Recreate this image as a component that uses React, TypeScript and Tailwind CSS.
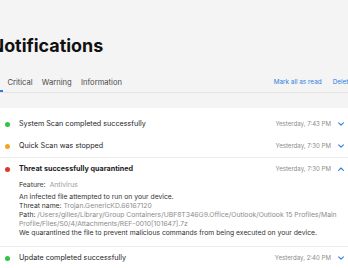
import React from 'react';

type Item = {
  id: number;
  title: string;
  time: string;
  color: string;
  open?: boolean;
};

const items: Item[] = [
  { id: 1, title: 'System Scan completed successfully', time: 'Yesterday, 7:43 PM', color: 'bg-[#2fc53f]' },
  { id: 2, title: 'Quick Scan was stopped', time: 'Yesterday, 7:30 PM', color: 'bg-[#f5a426]' },
  { id: 3, title: 'Threat successfully quarantined', time: 'Yesterday, 7:30 PM', color: 'bg-[#e5322b]', open: true },
  { id: 4, title: 'Update completed successfully', time: 'Yesterday, 2:40 PM', color: 'bg-[#2fc53f]' },
];

const Chevron = ({ up }: { up?: boolean }) => (
  <svg width="6" height="4" viewBox="0 0 6 4" className="ml-[7px]">
    <polyline
      points={up ? '0.6,3.3 3,1 5.4,3.3' : '0.6,0.8 3,3.1 5.4,0.8'}
      fill="none"
      stroke="#2f7de1"
      strokeWidth="1.1"
      strokeLinecap="round"
      strokeLinejoin="round"
    />
  </svg>
);

const Details = () => (
  <div className="pl-[19px] pr-[6px] pb-[9px] text-[6.8px] leading-[9px] text-[#333]">
    <div>
      <span className="font-medium text-[#555]">Feature:</span>
      <span className="ml-[4px] text-[#9a9a9a]">Antivirus</span>
    </div>
    <div className="mt-[3px]">
      <p>An infected file attempted to run on your device.</p>
      <p>
        Threat name: <span className="text-[#8c8c8c]">Trojan.GenericKD.66167120</span>
      </p>
      <p>
        Path:{' '}
        <span className="text-[#8c8c8c]">
          /Users/gilles/Library/Group Containers/UBF8T346G9.Office/Outlook/Outlook 15 Profiles/Main
          Profile/Files/S0/4/Attachments/REF-0010[101647].7z
        </span>
      </p>
      <p>We quarantined the file to prevent malicious commands from being executed on your device.</p>
    </div>
  </div>
);

const Row = ({ item }: { item: Item }) => (
  <div className="flex h-[22px] items-center pl-[5px] pr-[4px]">
    <span className={`h-[5px] w-[5px] rounded-full ${item.color}`} />
    <span className={`ml-[9px] text-[7.2px] text-[#1d1d1f] ${item.open ? 'font-bold' : ''}`}>
      {item.title}
    </span>
    <span className="ml-auto text-[6.1px] text-[#8b8b8b]">{item.time}</span>
    <Chevron up={item.open} />
  </div>
);

export default function App() {
  return (
    <div className="h-[268px] w-[348px] overflow-hidden bg-[#f4f4f4] font-['Inter',sans-serif]">
      <h1 className="-ml-[9.5px] pt-[35px] text-[17.9px] font-bold leading-[22px] text-[#111]">Notifications</h1>

      <div className="-ml-[15px] mt-[17px] flex h-[19px] w-[400px] items-stretch border-b border-[#e3e3e3] text-[7.6px] text-[#4a4a4a]">
        <div className="flex items-center px-[4.5px] shadow-[inset_0_-2px_0_#2f7de1]">All</div>
        <div className="flex items-center px-[4.5px]">Critical</div>
        <div className="flex items-center px-[4.7px]">Warning</div>
        <div className="flex items-center px-[4.7px]">Information</div>
        <div className="ml-[147px] flex items-center text-[6.4px] text-[#2f7de1]">Mark all as read</div>
        <div className="ml-[11px] flex items-center text-[6.4px] text-[#2f7de1]">Delete all</div>
      </div>

      <div className="mt-[15px] bg-white pt-[5px]">
        {items.map((item, i) => (
          <div
            key={item.id}
            className={`${item.open ? 'border-t border-[#ececec]' : ''} ${i === 3 ? 'border-t border-b border-[#ececec]' : ''}`}
          >
            <Row item={item} />
            {item.open && <Details />}
          </div>
        ))}
      </div>
    </div>
  );
}
